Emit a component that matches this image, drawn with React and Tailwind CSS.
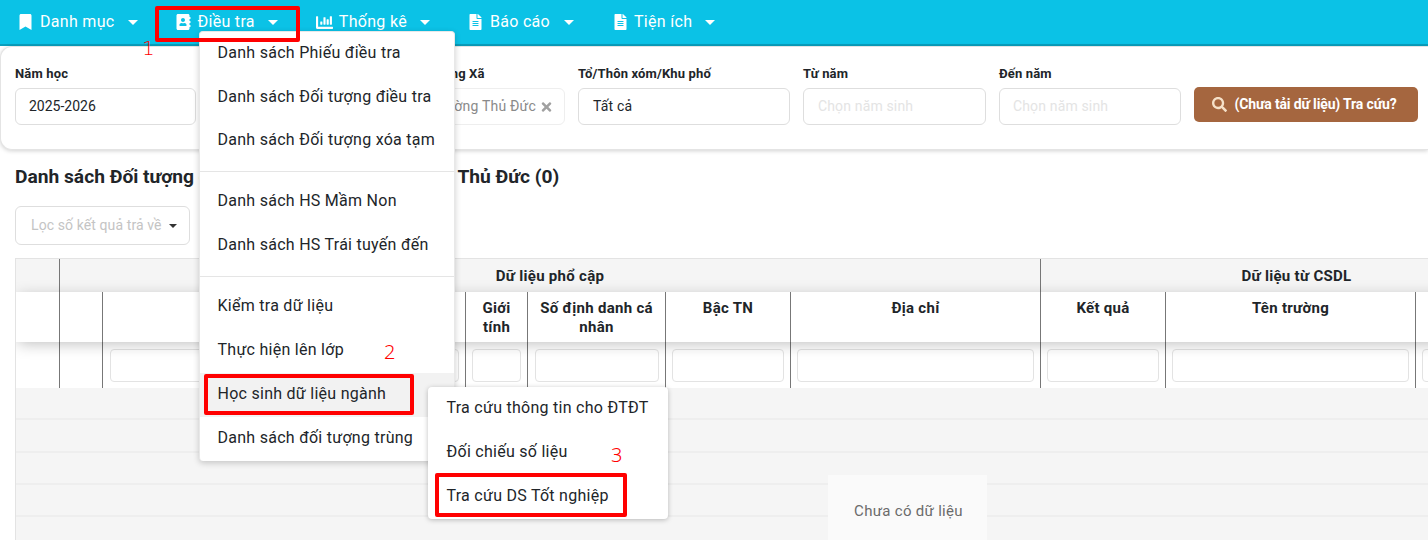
import { FaAddressBook, FaBookmark, FaChartBar, FaFileAlt, FaSearch, FaTimes } from "react-icons/fa";

const navItems = [
  { label: "Danh mục", icon: FaBookmark, iconClass: "w-[13px] h-[16px]", textClass: "ml-[8px] mr-[14px]", gap: "mr-[38px]" },
  { label: "Điều tra", icon: FaAddressBook, iconClass: "w-[15px] h-[16px]", textClass: "ml-[6px] mr-[13px]", gap: "mr-[38px]" },
  { label: "Thống kê", icon: FaChartBar, iconClass: "w-[17px] h-[17px]", textClass: "ml-[6px] mr-[13px]", gap: "mr-[39px]" },
  { label: "Báo cáo", icon: FaFileAlt, iconClass: "w-[13px] h-[16px]", textClass: "ml-[8px] mr-[14px]", gap: "mr-[40px]" },
  { label: "Tiện ích", icon: FaFileAlt, iconClass: "w-[13px] h-[16px]", textClass: "ml-[7px] mr-[13px]", gap: "mr-0" },
];

// the columns under the dropdown stay empty, their headers are not visible anyway
const columns = [
  { label: "" },
  { label: "" },
  { label: "", input: "pl-[7px]" },
  { label: "", input: "pl-[6px]" },
  { label: "Giới tính", input: "pl-[6px]" },
  { label: "Số định danh cá nhân", input: "pl-[7px]" },
  { label: "Bậc TN", input: "pl-[6px]" },
  { label: "Địa chỉ", input: "pl-[6px]" },
  { label: "Kết quả", input: "pl-[6px]" },
  { label: "Tên trường", input: "pl-[6px]" },
  { label: "", input: "pl-[6px]" },
];

const gridCols = "grid grid-cols-[43px_43px_293px_70px_62px_138px_125px_250px_125px_250px_137px]";

const menuGroups = [
  ["Danh sách Phiếu điều tra", "Danh sách Đối tượng điều tra", "Danh sách Đối tượng xóa tạm"],
  ["Danh sách HS Mầm Non", "Danh sách HS Trái tuyến đến"],
  ["Kiểm tra dữ liệu", "Thực hiện lên lớp", "Học sinh dữ liệu ngành", "Danh sách đối tượng trùng"],
];

const subItems = ["Tra cứu thông tin cho ĐTĐT", "Đối chiếu số liệu", "Tra cứu DS Tốt nghiệp"];

const Field = ({ label, width, children, muted }) => (
  <div className={width}>
    <div className="h-[14px] text-[13px] font-bold leading-[14px] tracking-[0.15px] text-[#212529] mb-[7px] whitespace-nowrap">{label}</div>
    <div
      className={`h-[37px] rounded-[6px] border flex items-center px-[14px] text-[14px] tracking-[0.2px] bg-white ${
        muted ? "border-[#eeeeee] text-[#8a8a8a]" : "border-[#dedede] text-[#212529]"
      }`}
    >
      {children}
    </div>
  </div>
);

const App = () => {
  return (
    <div className="relative w-[1428px] h-[540px] overflow-hidden bg-white font-['Roboto',sans-serif] text-[#212529]">
      {/* Top nav */}
      <div className="h-[46px] bg-[#0bc2e6] border-b-2 border-[#0a9fbd] flex items-center pl-[19px] text-white">
        {navItems.map((item) => (
          <div key={item.label} className={`flex items-center ${item.gap}`}>
            <item.icon className={item.iconClass} />
            <span className={`${item.textClass} text-[16px] tracking-[0.3px] leading-[24px]`}>{item.label}</span>
            <span className="w-0 h-0 border-x-[5px] border-x-transparent border-t-[5px] border-t-white" />
          </div>
        ))}
      </div>

      {/* Filters */}
      <div className="h-[104px] rounded-l-[12px] border border-r-0 border-[#e4e4e4] shadow-[0_1px_4px_rgba(0,0,0,0.18)] bg-white flex gap-[13px] pl-[14px] pt-[20px]">
        <Field label="Năm học" width="w-[181px]">
          <span className="tracking-normal -ml-px">2025-2026</span>
        </Field>
        <Field label="" width="w-[197px]" />
        <Field label="Phường Xã" width="w-[146px]" muted>
          <span className="flex-1 min-w-0 flex justify-end whitespace-nowrap">Phường Thủ Đức</span>
          <FaTimes className="w-[11px] h-[14px] ml-[5px] -mr-[2px] shrink-0 text-[#a0a0a0]" />
        </Field>
        <Field label="Tổ/Thôn xóm/Khu phố" width="w-[212px]">Tất cả</Field>
        <Field label="Từ năm" width="w-[183px]">
          <span className="text-[#e4e4e4] tracking-[0.15px]">Chọn năm sinh</span>
        </Field>
        <Field label="Đến năm" width="w-[182px]">
          <span className="text-[#e4e4e4] tracking-[0.15px] -ml-px">Chọn năm sinh</span>
        </Field>
        <button className="w-[224px] h-[35px] mt-[20px] pr-[3px] rounded-[5px] bg-[#a5663f] text-white text-[14px] tracking-[-0.15px] font-bold flex items-center justify-center whitespace-nowrap">
          <FaSearch className="w-[15px] h-[15px] mr-[7px] text-[#f5e0c8]" />
          (Chưa tải dữ liệu) Tra cứu?
        </button>
      </div>

      {/* Title */}
      <h1 className="ml-[15px] mt-[14px] text-[19.2px] leading-[26px] font-bold whitespace-nowrap">
        Danh sách Đối tượng điều tra năm 2025-2026 - Xã: Thủ Đức (0)
      </h1>

      {/* Page size select */}
      <div className="ml-[15px] mt-[16px] w-[175px] h-[39px] rounded-[6px] border border-[#dedede] flex items-center pl-[15px] text-[14px] tracking-[0.1px] text-[#c4c4c4]">
        Lọc số kết quả trả về
        <span className="ml-[7px] w-0 h-0 border-x-[4px] border-x-transparent border-t-[4px] border-t-[#333]" />
      </div>

      {/* Table */}
      <div className="mt-[13px] ml-[15px] w-[1537px] overflow-hidden border-l border-t border-[#e3e3e3] text-[15px] font-bold text-center tracking-[0.3px]">
        <div className="grid grid-cols-[43px_981px_512px] h-[33px] bg-[#f5f5f5]">
          <div />
          <div className="border-l border-[#777] leading-[34px]">Dữ liệu phổ cập</div>
          <div className="border-l border-[#777] leading-[34px]">Dữ liệu từ CSDL</div>
        </div>
        <div className={`${gridCols} relative h-[50px] bg-white shadow-[0_3px_16px_-2px_rgba(0,0,0,0.28)]`}>
          {columns.map((col, i) => (
            <div key={i} className={`px-[8px] pt-[7px] leading-[19px] ${i > 0 ? "border-l border-[#777]" : ""}`}>
              {col.label}
            </div>
          ))}
        </div>
        <div className={`${gridCols} h-[46px] bg-white`}>
          {columns.map((col, i) => (
            <div key={i} className={`${col.input || ""} pr-[6px] pt-[7px] ${i > 0 ? "border-l border-[#777]" : ""}`}>
              {col.input && <div className="h-[33px] rounded-[4px] border border-[#e3e3e3]" />}
            </div>
          ))}
        </div>
        {[0, 1, 2, 3, 4].map((row) => (
          <div key={row} className="h-[32.33px] bg-[#f5f5f5] border-b-2 border-[#eeeeee]" />
        ))}
      </div>

      {/* Empty overlay */}
      <div className="absolute left-[828px] top-[475px] w-[159px] h-[65px] bg-[#fafafa] flex items-center justify-center pt-[7px] pl-[2px] text-[15px] tracking-[0.3px] text-[#6b6b6b]">
        Chưa có dữ liệu
      </div>

      {/* Dieu tra dropdown */}
      <div className="absolute left-[199px] top-[31px] w-[256px] bg-white rounded-[4px] border border-[#e8e8e8] border-b-0 shadow-[0_2px_6px_rgba(0,0,0,0.2)] text-[16px] tracking-[0.27px]">
        {menuGroups.map((group, g) => (
          <div key={g} className={g === 0 ? "" : "mt-[8px] pt-[8px] border-t border-[#e5e5e5]"}>
            {group.map((item) => (
              <div
                key={item}
                className={`h-[44px] pl-[17.5px] flex items-center pb-[2px] whitespace-nowrap ${
                  item === "Học sinh dữ liệu ngành" ? "bg-[#f2f2f2]" : ""
                } ${g === 0 ? "-mb-[0.33px]" : ""}`}
              >
                {item}
              </div>
            ))}
          </div>
        ))}
      </div>

      {/* Submenu */}
      <div className="absolute left-[428px] top-[387px] w-[240px] bg-white rounded-[4px] shadow-[0_1px_5px_rgba(0,0,0,0.25)] text-[16px] tracking-[0.27px]">
        {subItems.map((item) => (
          <div key={item} className="h-[44px] pl-[18.5px] flex items-center pb-[3px] whitespace-nowrap">
            {item}
          </div>
        ))}
      </div>

      {/* Red annotations */}
      <div className="absolute left-[155px] top-[6px] w-[145px] h-[36px] border-[4px] border-[#ff0000] rounded-[2px]" />
      <div className="absolute left-[204px] top-[374px] w-[210px] h-[41px] border-[4px] border-[#ff0000] rounded-[2px]" />
      <div className="absolute left-[435px] top-[473px] w-[192px] h-[44px] border-[4px] border-[#ff0000] rounded-[2px]" />
      <span className="absolute left-[142px] top-[36px] text-[20px] leading-[24px] text-[#ff0000] font-['DejaVu_Sans',sans-serif] font-extralight">1</span>
      <span className="absolute left-[384px] top-[340px] text-[20px] leading-[24px] text-[#ff0000] font-['Noto_Sans',sans-serif] font-light">2</span>
      <span className="absolute left-[611px] top-[443px] text-[20px] leading-[24px] text-[#ff0000] font-['Noto_Sans',sans-serif] font-light">3</span>
    </div>
  );
};

export default App;
